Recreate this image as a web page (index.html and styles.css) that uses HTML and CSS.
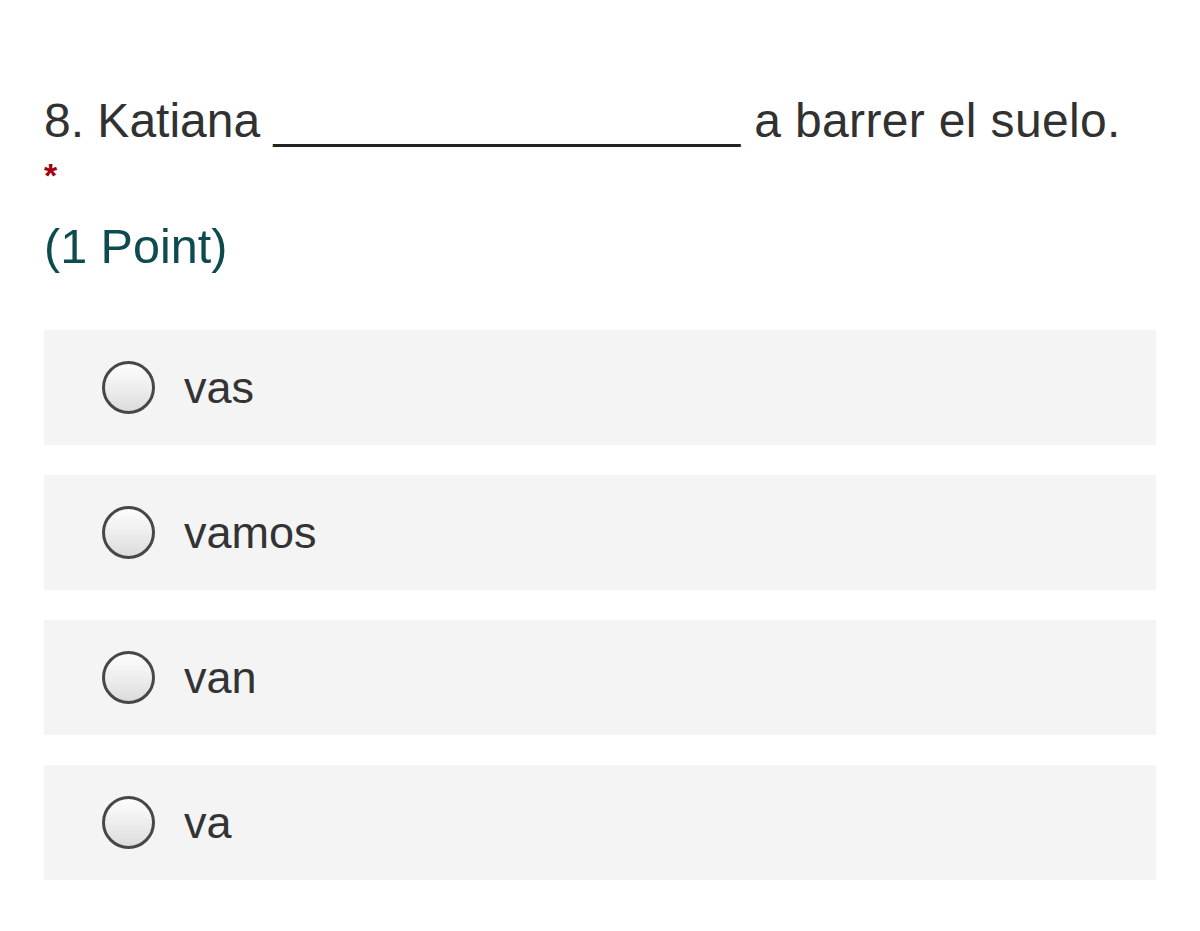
FILE: index.html
```html
<!DOCTYPE html>
<html lang="es">
<head>
<meta charset="utf-8">
<title>Pregunta 8</title>
<link rel="stylesheet" href="styles.css">
</head>
<body>
<div class="question">
  <div class="title">8. Katiana <span class="blank">_________________</span> <span class="rest">a barrer el suelo.</span></div>
  <div class="required">*</div>
  <div class="points">(1 Point)</div>
  <div class="options">
    <label class="option"><span class="radio"></span><span class="label">vas</span></label>
    <label class="option"><span class="radio"></span><span class="label">vamos</span></label>
    <label class="option"><span class="radio"></span><span class="label">van</span></label>
    <label class="option"><span class="radio"></span><span class="label">va</span></label>
  </div>
</div>
</body>
</html>
```
FILE: styles.css
```css
html, body {
  margin: 0;
  padding: 0;
  background: #ffffff;
}
body {
  font-family: "Liberation Sans", Arial, sans-serif;
  color: #333333;
}
.question {
  padding: 93px 44px 0 44px;
}
.title {
  font-size: 48px;
  line-height: 56px;
  white-space: nowrap;
  color: #313131;
}
.blank {
  letter-spacing: 0.8px;
  color: #222222;
}
.rest {
  letter-spacing: 0.35px;
}
.required {
  font-size: 34px;
  font-weight: bold;
  line-height: 52px;
  color: #a4000f;
}
.points {
  margin-top: 17px;
  font-size: 48.5px;
  line-height: 56px;
  color: #0d4b4f;
}
.options {
  margin-top: 56px;
  display: flex;
  flex-direction: column;
  gap: 30px;
}
.option {
  display: flex;
  align-items: center;
  height: 115px;
  background: #f4f4f4;
  padding-left: 58px;
}
.radio {
  box-sizing: border-box;
  width: 53px;
  height: 53px;
  border-radius: 50%;
  border: 3px solid #474747;
  background: linear-gradient(to bottom, #fdfdfd 0%, #ececec 55%, #dcdcdc 100%);
  flex: none;
}
.label {
  margin-left: 29px;
  font-size: 45px;
  color: #333333;
}
```
